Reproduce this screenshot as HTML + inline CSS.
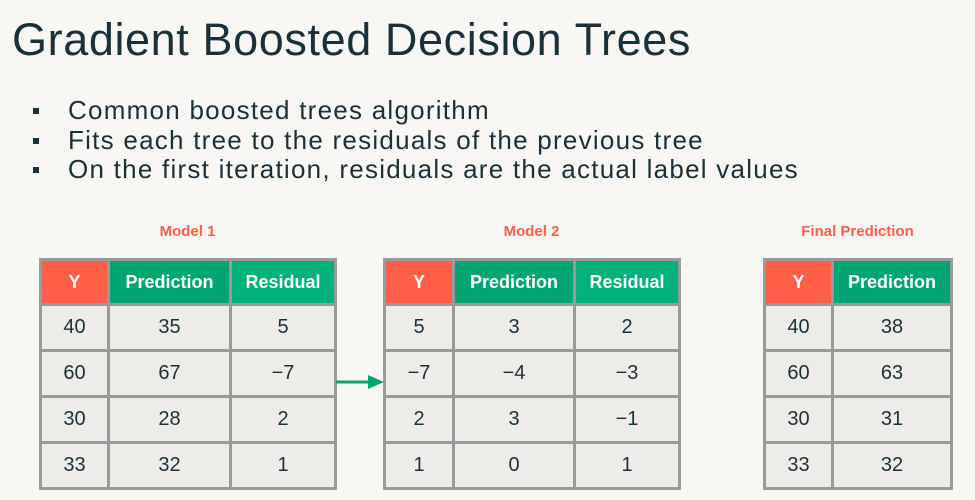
<!DOCTYPE html>
<html><head><style>
body{margin:0;width:975px;height:500px;background:#F8F7F4;font-family:"Liberation Sans",sans-serif;color:#1B3139;position:relative;overflow:hidden}
.t{position:absolute;left:12px;top:14px;font-size:45px;letter-spacing:0.6px;white-space:nowrap}
.b{position:absolute;left:68px;font-size:26px;letter-spacing:1.25px;white-space:nowrap}
.sq{position:absolute;left:33px;width:6px;height:6px;background:#1B3139}
.lab{position:absolute;top:223px;font-size:15px;font-weight:bold;color:#FF5F46;text-align:center}
table{position:absolute;top:258px;border-collapse:collapse;font-size:20px;table-layout:fixed}
td{border:3px solid #9A9A9A;background:#EEECE9;text-align:center;height:43px;padding:0}
th{border:3px solid #9A9A9A;color:#fff;font-weight:bold;font-size:18px;height:42px;padding:0}
.o{background:#FF5F46}.g{background:#00A572}.g2{background:#00B27A}
</style></head><body>
<div class="t">Gradient Boosted Decision Trees</div>
<div class="sq" style="top:108px"></div><div class="b" style="top:95px">Common boosted trees algorithm</div>
<div class="sq" style="top:138px"></div><div class="b" style="top:125px">Fits each tree to the residuals of the previous tree</div>
<div class="sq" style="top:167px"></div><div class="b" style="top:154px">On the first iteration, residuals are the actual label values</div>
<div class="lab" style="left:39px;width:297px">Model 1</div>
<div class="lab" style="left:383px;width:297px">Model 2</div>
<div class="lab" style="left:763px;width:189px">Final Prediction</div>
<table style="left:39px;width:298px"><colgroup><col style="width:68px"><col style="width:122px"><col></colgroup><tr><th class="o">Y</th><th class="g">Prediction</th><th class="g2">Residual</th></tr>
<tr><td>40</td><td>35</td><td>5</td></tr><tr><td>60</td><td>67</td><td>−7</td></tr><tr><td>30</td><td>28</td><td>2</td></tr><tr><td>33</td><td>32</td><td>1</td></tr></table>
<table style="left:383px;width:298px"><colgroup><col style="width:69px"><col style="width:121px"><col></colgroup><tr><th class="o">Y</th><th class="g">Prediction</th><th class="g2">Residual</th></tr>
<tr><td>5</td><td>3</td><td>2</td></tr><tr><td>−7</td><td>−4</td><td>−3</td></tr><tr><td>2</td><td>3</td><td>−1</td></tr><tr><td>1</td><td>0</td><td>1</td></tr></table>
<table style="left:763px;width:190px"><colgroup><col style="width:68px"><col></colgroup><tr><th class="o">Y</th><th class="g">Prediction</th></tr>
<tr><td>40</td><td>38</td></tr><tr><td>60</td><td>63</td></tr><tr><td>30</td><td>31</td></tr><tr><td>33</td><td>32</td></tr></table>
<svg style="position:absolute;left:336px;top:373px" width="50" height="20"><line x1="0" y1="9" x2="36" y2="9" stroke="#00A572" stroke-width="3"/><polygon points="32,2 48,9 32,16" fill="#00A572"/></svg>
</body></html>
